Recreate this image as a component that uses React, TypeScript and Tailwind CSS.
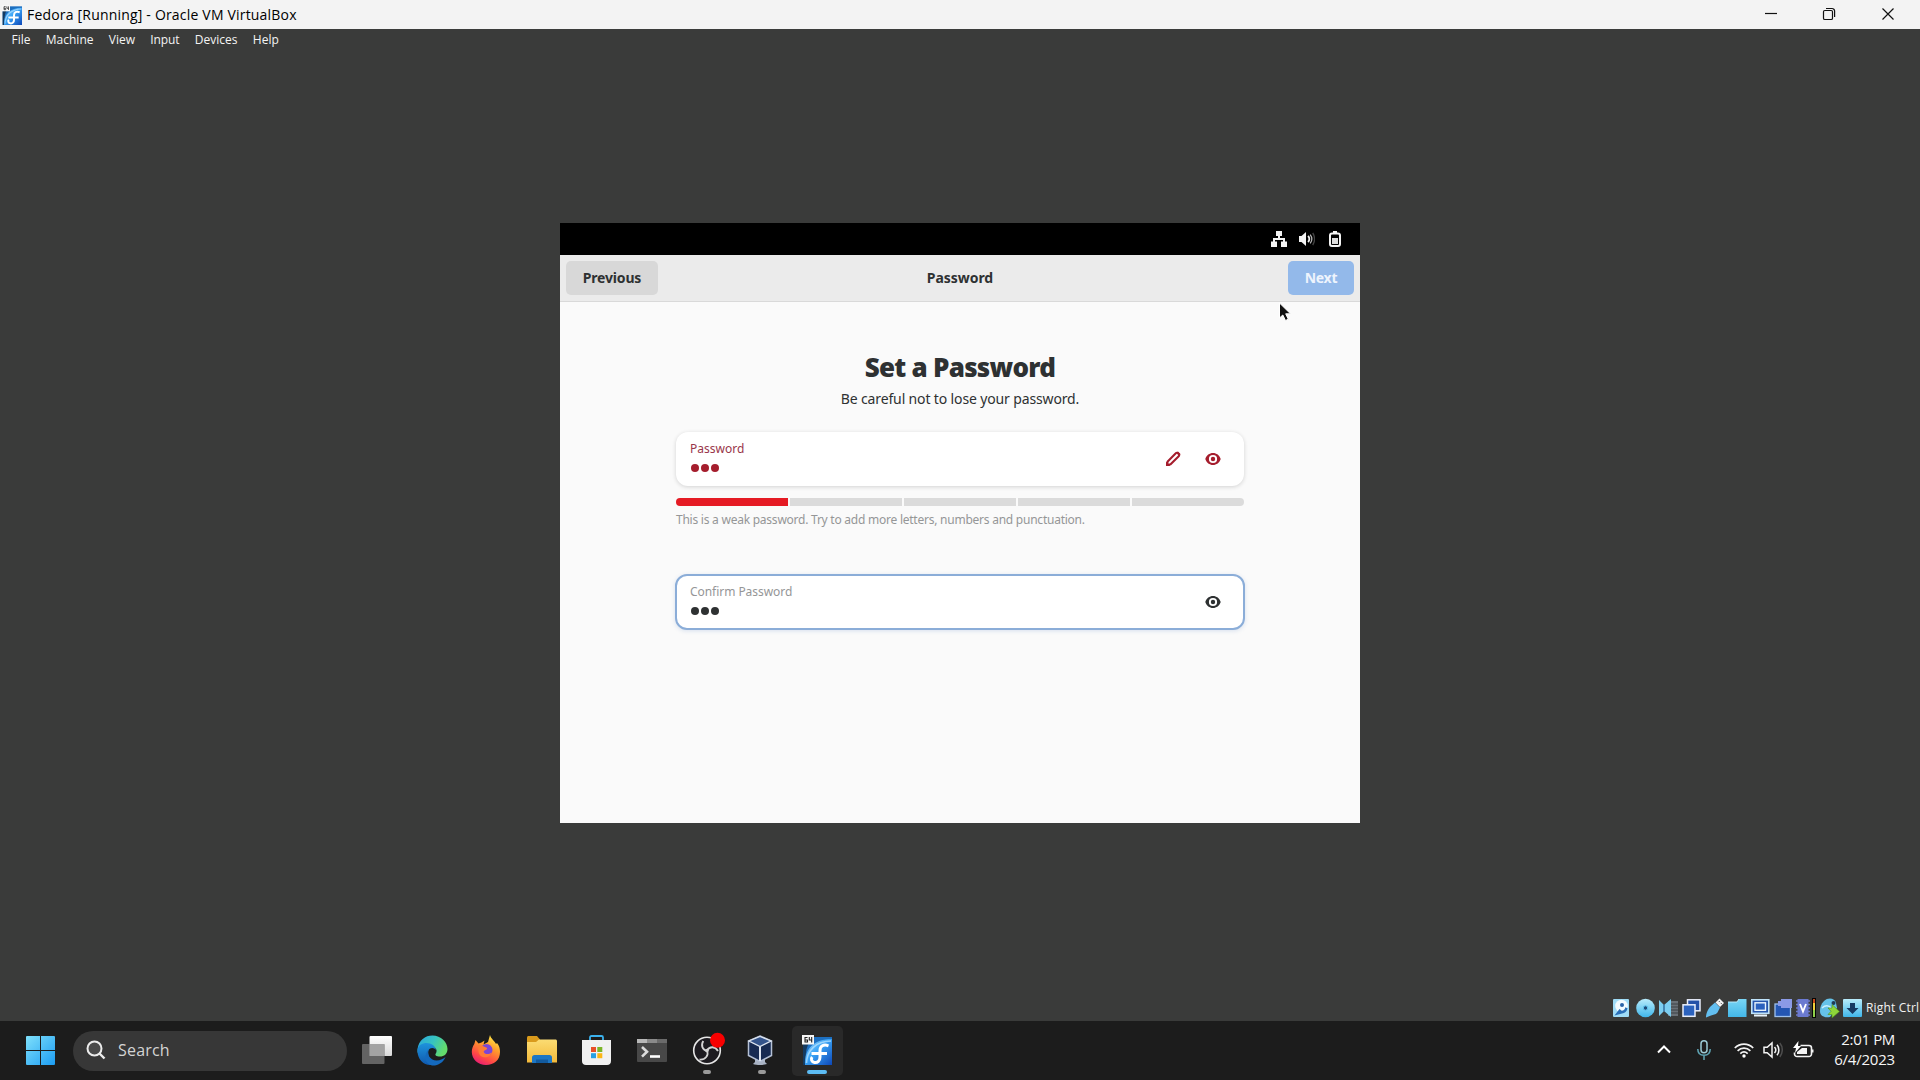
import type { ReactNode } from "react";

const UI = "font-['Open_Sans','Noto_Sans',sans-serif]";
const GUEST = "font-['Noto_Sans','Open_Sans',sans-serif]";

/* ---------- shared artwork ---------- */

function FedoraIcon({ size }: { size: number }) {
  return (
    <svg width={size} height={size} viewBox="0 0 30 30" className="block">
      <defs>
        <linearGradient id="fed" x1="0" y1="0" x2="1" y2="1">
          <stop offset="0" stopColor="#a4dcff" />
          <stop offset=".45" stopColor="#3aa4f6" />
          <stop offset="1" stopColor="#0d47b8" />
        </linearGradient>
      </defs>
      <rect x="1" y="2" width="29" height="28" fill="#1d6fc0" />
      <path d="M1 30V8h6C4 13 3 20 4 30z" fill="#143a60" />
      <path d="M3 30C2 14 12 4 30 4v26z" fill="url(#fed)" />
      <path d="M4.500 28C5 15 14 6.500 29 6" fill="none" stroke="#bfe6ff" strokeWidth="1.600" opacity=".7" />
      <path d="M26.500 10.800c-5-1.800-8.500.2-8.500 4.700v6.500c0 4-2.500 6-5.500 5.500-3-.5-4-3.500-2.300-5.500M9.500 18.600h15.500" fill="none" stroke="#fff" strokeWidth="3" />
      <rect x="0" y="0" width="12" height="9.500" fill="#f7f7f7" />
      <path d="M5.500 2.500H3v4.500h2.500V5H3M7.300 2v3H10M9.700 2V7.500" fill="none" stroke="#222" strokeWidth="1.100" />
    </svg>
  );
}

/* ---------- host window ---------- */

function TitleBar() {
  return (
    <div className="flex h-[29px] shrink-0 items-center bg-[#f3f3f3] pl-[2px] text-black">
      <FedoraIcon size={20} />
      <span className="ml-[5px] whitespace-nowrap text-[14px] leading-[20px] tracking-[0.19px]">Fedora [Running] - Oracle VM VirtualBox</span>
      <div className="ml-auto flex h-full pb-px pr-[2px]">
        <span className="flex w-[58px] items-center justify-center">
          <svg width="14" height="14" viewBox="0 0 14 14"><path d="M1 6.500h12" stroke="#111" strokeWidth="1.200" /></svg>
        </span>
        <span className="flex w-[58px] items-center justify-center">
          <svg width="14" height="14" viewBox="0 0 14 14" fill="none" stroke="#111" strokeWidth="1.200">
            <rect x="1.500" y="3.500" width="9" height="9" rx="1.300" />
            <path d="M4 1.500h6A2.600 2.600 0 0 1 12.600 4.100V10" />
          </svg>
        </span>
        <span className="flex w-[60px] items-center justify-center">
          <svg width="14" height="14" viewBox="0 0 14 14"><path d="M1.500 1.500l11 11M12.500 1.500l-11 11" stroke="#111" strokeWidth="1.200" /></svg>
        </span>
      </div>
    </div>
  );
}

function MenuBar() {
  return (
    <div className="flex h-[22px] shrink-0 items-center gap-[15.300px] pl-[11.500px] text-[12px] leading-[16px] text-[#f4f4f4]">
      <span>File</span>
      <span>Machine</span>
      <span>View</span>
      <span className="tracking-[-0.1px]">Input</span>
      <span>Devices</span>
      <span>Help</span>
    </div>
  );
}

/* ---------- guest desktop ---------- */

function GuestTopBar() {
  return (
    <div className="flex h-8 items-center justify-end bg-black pr-[17px]">
      <svg width="16" height="16" viewBox="0 0 16 16" fill="#f4f4f4">
        <path d="M5 0h6v5H9v2h5v3.500h2V16h-6v-5.500h2V9H4v1.500h2V16H0v-5.500h2V7h5V5H5z" />
      </svg>
      <svg className="ml-[12px]" width="16" height="16" viewBox="0 0 16 16" fill="none">
        <path d="M0 5h2.500L7 1v14l-4.500-4H0z" fill="#f4f4f4" />
        <path d="M9 5c1.800 1.700 1.800 4.300 0 6" stroke="#f4f4f4" strokeWidth="1.800" />
        <path d="M11.200 3.600c2 2.700 2 6.100 0 8.800" stroke="#b5b5b5" strokeWidth="1.300" />
        <path d="M13.700 2c2.500 3.500 2.500 8.500 0 12" stroke="#444" strokeWidth="1.300" />
      </svg>
      <svg className="ml-[12px]" width="16" height="16" viewBox="0 0 16 16">
        <path d="M6 0h4v2H6z" fill="#f4f4f4" />
        <rect x="3" y="2.500" width="10" height="12.500" rx="2" fill="none" stroke="#f4f4f4" strokeWidth="2" />
        <rect x="5" y="7" width="6" height="6" fill="#ddd" />
      </svg>
    </div>
  );
}

function Eye({ color }: { color: string }) {
  return (
    <svg width="16" height="16" viewBox="0 0 16 16">
      <path fillRule="evenodd" fill={color} d="M8 2C4.500 2 1.400 4.300 0.300 8c1.100 3.700 4.200 6 7.700 6s6.600-2.300 7.700-6C14.600 4.300 11.500 2 8 2zm0 1.900a4.100 4.100 0 1 1 0 8.200 4.100 4.100 0 0 1 0-8.200z" />
      <circle cx="8" cy="8" r="2.200" fill={color} />
    </svg>
  );
}

function Pencil() {
  return (
    <svg width="16" height="16" viewBox="0 0 16 16">
      <path d="M2 14l.7-3.600L10.800 2.300a1.600 1.600 0 0 1 2.300 0l.6.6a1.600 1.600 0 0 1 0 2.300L5.600 13.300z" fill="none" stroke="#a51d2d" strokeWidth="2.100" strokeLinejoin="round" />
      <path d="M11 1.500l3.500 3.500 1-2-2.500-2.500zM1 15v-4.500L5.500 15z" fill="#a51d2d" />
    </svg>
  );
}

function Dots({ className }: { className: string }) {
  return (
    <div className="flex gap-[2.400px]">
      {[0, 1, 2].map((i) => (
        <span key={i} className={`h-[8px] w-[7.600px] rounded-full ${className}`} />
      ))}
    </div>
  );
}

function GuestWindow() {
  return (
    <div className={`relative h-[600px] w-[800px] bg-[#fafafa] text-[#2e3132] ${GUEST}`}>
      <GuestTopBar />
      <div className="grid h-[47px] grid-cols-3 items-center border-b border-[#d9d9d9] bg-[#ebebeb] pb-px pl-[6px] pr-[6px] text-[14px] font-bold">
        <div className="flex h-[34px] w-[92px] items-center justify-center rounded-[5px] bg-[#d8d8d8] tracking-[-0.18px]">Previous</div>
        <div className="text-center tracking-[-0.05px]">Password</div>
        <div className="ml-auto flex h-[34px] w-[66px] items-center justify-center rounded-[5px] bg-[#93b9ea] tracking-[-0.25px] text-[#eef4fd]">Next</div>
      </div>

      <div className="mx-auto flex w-[568px] flex-col">
        <h1 className="mt-[49px] text-center text-[26px] font-black leading-[32px] tracking-[-0.75px]">Set a Password</h1>
        <p className="mt-[5px] text-center text-[14px] leading-[22px] tracking-[-0.14px]">Be careful not to lose your password.</p>

        <div className="mt-[22px] flex h-[54px] items-center rounded-[12px] bg-white pl-[14px] pr-[23px] shadow-[0_1px_4px_rgba(0,0,0,0.16)]">
          <div className="flex flex-col pb-[5px]">
            <span className="text-[12px] leading-[16px] text-[#99364a]">Password</span>
            <div className="mt-[7px] pl-px"><Dots className="bg-[#a51d2d]" /></div>
          </div>
          <div className="ml-auto flex gap-[24px]">
            <Pencil />
            <Eye color="#a51d2d" />
          </div>
        </div>

        <div className="mt-[12px] flex h-[8px] gap-[2px] overflow-hidden rounded-[4px]">
          <span className="flex-1 bg-[#e51b24]" />
          <span className="flex-1 bg-[#dbdbdb]" />
          <span className="flex-1 bg-[#dbdbdb]" />
          <span className="flex-1 bg-[#dbdbdb]" />
          <span className="flex-1 bg-[#dbdbdb]" />
        </div>
        <p className="mt-[6px] whitespace-nowrap text-[12px] leading-[16px] tracking-[-0.24px] text-[#959697]">This is a weak password. Try to add more letters, numbers and punctuation.</p>

        <div className="-mx-px mt-[46px] flex h-[56px] items-center rounded-[12px] border-2 border-[#8badd8] bg-white pl-[13px] pr-[22px] shadow-[0_1px_4px_rgba(60,110,190,0.18)]">
          <div className="flex flex-col pb-[5px]">
            <span className="text-[12px] leading-[16px] tracking-[-0.05px] text-[#959697]">Confirm Password</span>
            <div className="mt-[7px] pl-px"><Dots className="bg-[#2e3132]" /></div>
          </div>
          <div className="ml-auto"><Eye color="#2e3132" /></div>
        </div>
      </div>

      <svg className="absolute left-[718px] top-[79px]" width="14" height="20" viewBox="0 0 14 20">
        <path d="M1.500 1v15l3.300-3 2.700 5.500 2.800-1.300-2.600-5.400H12.500z" fill="#111" stroke="#fff" strokeWidth="1" />
      </svg>
    </div>
  );
}

/* ---------- VirtualBox status bar ---------- */

function Defs() {
  return (
    <svg width="0" height="0" className="absolute">
      <defs>
        <linearGradient id="sky" x1="0" y1="0" x2="0" y2="1">
          <stop offset="0" stopColor="#b9ecfb" />
          <stop offset="1" stopColor="#3fb6ea" />
        </linearGradient>
        <linearGradient id="sky2" x1="0" y1="0" x2="0" y2="1">
          <stop offset="0" stopColor="#7ad6f5" />
          <stop offset="1" stopColor="#43b7e8" />
        </linearGradient>
      </defs>
    </svg>
  );
}

function StatusIcon({ w, ml, children }: { w: number; ml: number; children: ReactNode }) {
  return (
    <svg width={w} height="20" viewBox={`0 0 ${w} 20`} className="block shrink-0" style={{ marginLeft: ml }}>
      {children}
    </svg>
  );
}

function StatusBar() {
  return (
    <div className="mt-auto flex h-[26px] shrink-0 items-start pl-[1613px] pt-[3px]">
      <StatusIcon w={16} ml={0}>
        <rect y="1" width="16" height="18" rx="1" fill="#9fdcf7" />
        <circle cx="8.500" cy="8" r="6.300" fill="#f2fbff" />
        <circle cx="9" cy="7" r="2" fill="#2a63a8" />
        <path d="M1.500 17.500l5-6.500 2.200 1.800c2-.2 3.300-1.600 3.600-3.600l2.200 1c-.6 3.200-2.800 5-5.500 5.300z" fill="#2a6fb8" />
      </StatusIcon>
      <StatusIcon w={19} ml={7}>
        <circle cx="9.500" cy="10" r="9.300" fill="url(#sky)" />
        <circle cx="9.500" cy="10" r="2.200" fill="#1e4b78" stroke="#5ec4ef" />
      </StatusIcon>
      <StatusIcon w={19} ml={4}>
        <rect x="9" y="3" width="10" height="15" fill="#6a7076" />
        <path d="M12 6h7M12 9h7M12 12h7M12 15h7" stroke="#3b4044" />
        <path d="M0 2l5 5 7-6v18l-7-6-5 5z" fill="#7ccdf0" />
        <path d="M5 6.500v7" stroke="#255f92" strokeWidth="1.300" />
      </StatusIcon>
      <StatusIcon w={19} ml={4}>
        <rect x="5.500" y="1.800" width="12.500" height="11" fill="#2350a8" stroke="#e9eefb" strokeWidth="1.500" />
        <rect x="1" y="6.800" width="12" height="11.500" fill="#2b62be" stroke="#e9eefb" strokeWidth="1.500" />
      </StatusIcon>
      <StatusIcon w={19} ml={4}>
        <path d="M10.500 4.500L14.500.5 19 5l-4 4z" fill="#f3f3f3" />
        <path d="M14 3.200l.9.900M16 5.200l.9.900" stroke="#333" />
        <path d="M6 8L10 4.500l5 5-2.500 5c-2 2.500-4.500 2-6.500 3L1 19.500c0-3 1.500-8.500 5-11.500z" fill="#63bff0" />
      </StatusIcon>
      <StatusIcon w={19} ml={4}>
        <path d="M0 4h9l2-3h7.500v18H0z" fill="url(#sky2)" />
        <path d="M0 4h9l2-3" fill="none" stroke="#b7e9fb" />
      </StatusIcon>
      <StatusIcon w={19} ml={4}>
        <rect x=".8" y="1.800" width="17" height="13.500" fill="#2656ac" stroke="#bfe3fa" strokeWidth="1.600" />
        <rect x="4" y="4.800" width="10.500" height="7.500" fill="#2b62be" stroke="#e9f4fd" strokeWidth="1.400" />
        <path d="M3 17.500h13" stroke="#e9f4fd" strokeWidth="2" />
      </StatusIcon>
      <StatusIcon w={19} ml={4}>
        <rect x="1" y="6" width="15.500" height="12.500" fill="#2456b3" stroke="#9dc0ee" strokeWidth="1.300" />
        <path d="M4 3h3V1h11v9H7V8H4z" fill="#8b9ae6" />
      </StatusIcon>
      <StatusIcon w={14} ml={3}>
        <path d="M0 3h14M0 6.500h14M0 10h14M0 13.500h14M0 17h14" stroke="#6d7ac8" strokeWidth="1.500" />
        <rect x="1.500" y="1" width="11" height="18" fill="#6b7ad0" />
        <path d="M4 6l3 7.500L10 6" fill="none" stroke="#fff" strokeWidth="1.900" />
      </StatusIcon>
      <StatusIcon w={4} ml={2}>
        <rect width="4" height="20" fill="#050505" />
        <rect x="1" y="1" width="2" height="4" fill="#c84a1a" />
        <rect x="1" y="5" width="2" height="7" fill="#f0cf3a" />
        <rect x="1" y="12" width="2" height="7" fill="#8fce4a" />
      </StatusIcon>
      <StatusIcon w={20} ml={4}>
        <path d="M4 3c4-4 11-3 12 2l1 5-7 9c-6 1-10-1-10-6 0-4 1-7 4-10z" fill="#66c2e9" />
        <path d="M2 10c3-3 7-3 9 0" fill="none" stroke="#c9f0fd" strokeWidth="1.500" />
        <circle cx="13.500" cy="5" r="2" fill="#1d3b57" />
        <path d="M8 10h4V6.500l7.500 7L12 20v-3.500H8l3-3.200z" fill="#8ed63a" stroke="#4c8a1c" strokeWidth=".6" />
      </StatusIcon>
      <StatusIcon w={19} ml={3}>
        <rect y="1" width="19" height="18" rx="1" fill="url(#sky)" />
        <path d="M7 5h5v5h3.500l-6 6-6-6H7z" fill="#173a63" />
      </StatusIcon>
      <span className="ml-[4px] whitespace-nowrap text-[12px] leading-[20px] tracking-[0.17px] text-[#f2f2f2]">Right Ctrl</span>
    </div>
  );
}

/* ---------- Windows taskbar ---------- */

function TaskItem({ children, active, running }: { children: ReactNode; active?: boolean; running?: boolean }) {
  return (
    <div className={`relative flex h-[50px] w-[51px] items-center justify-center rounded-[5px] pb-px ${active ? "bg-[#292929]" : ""}`}>
      {children}
      {running && <span className="absolute bottom-[2px] left-1/2 h-[4px] w-[8px] -translate-x-1/2 rounded-full bg-[#9a9a9a]" />}
      {active && <span className="absolute bottom-[2px] left-1/2 h-[4px] w-[20px] -translate-x-1/2 rounded-full bg-[#5cbcf4]" />}
    </div>
  );
}

function Taskbar() {
  return (
    <div className="flex h-[59px] shrink-0 items-center bg-[#1c1c1c]">
      <svg className="ml-[26px] shrink-0" width="29" height="29" viewBox="0 0 29 29">
        <defs>
          <linearGradient id="win" x1="0" y1="0" x2="1" y2="1">
            <stop offset="0" stopColor="#7fe0fb" />
            <stop offset="1" stopColor="#1c9cf2" />
          </linearGradient>
        </defs>
        <path d="M1 0h13v14H0V1a1 1 0 0 1 1-1zM15 0h13a1 1 0 0 1 1 1v13H15zM0 15h14v14H1a1 1 0 0 1-1-1zM15 15h14v13a1 1 0 0 1-1 1H15z" fill="url(#win)" />
      </svg>

      <div className="ml-[18px] flex h-[40px] w-[274px] shrink-0 items-center rounded-full bg-[#373737] pb-px pl-[13px]">
        <svg width="20" height="20" viewBox="0 0 20 20" fill="none" stroke="#ececec" strokeWidth="2">
          <circle cx="8.500" cy="8.500" r="7" fill="#4a4a4a" />
          <path d="M13.500 13.500l5 5" strokeWidth="2.400" />
        </svg>
        <span className="ml-[12px] text-[16px] leading-[22px] tracking-[0.2px] text-[#d4d4d4]">Search</span>
      </div>

      <div className="ml-[4.500px] flex items-center gap-[4px]">
        <TaskItem>
          <svg width="30" height="28" viewBox="0 0 30 28">
            <defs><linearGradient id="tv" x1="0" y1="0" x2="0" y2="1"><stop offset="0" stopColor="#fff" /><stop offset="1" stopColor="#d9d9d9" /></linearGradient></defs>
            <rect x="7.500" width="22.500" height="20" rx="1" fill="url(#tv)" />
            <rect y="8" width="22.500" height="20" rx="1" fill="#6d6d6d" opacity=".88" />
            <rect x="7.500" y="8" width="15" height="12" fill="#a3a3a3" />
          </svg>
        </TaskItem>
        <TaskItem>
          <svg width="31" height="31" viewBox="0 0 31 31">
            <defs>
              <linearGradient id="e1" x1="0" y1="0" x2="1" y2=".4"><stop offset="0" stopColor="#2aa5df" /><stop offset=".55" stopColor="#37c3c0" /><stop offset="1" stopColor="#63db6c" /></linearGradient>
              <linearGradient id="e2" x1="0" y1="0" x2="0" y2="1"><stop offset="0" stopColor="#1e93dc" /><stop offset="1" stopColor="#0f58ae" /></linearGradient>
            </defs>
            <path d="M.5 14C2 5 8 .5 15.500.5 24 .5 30.500 7 30.500 14c0 5-3.500 7.500-7.500 7.500-4 0-5-1.500-4.500-2.500 3-4-.5-8-5-8C8 11 3 14 .5 18z" fill="url(#e1)" />
            <path d="M.5 16c0-6 5-8 9-8 5 0 9 3 9.500 7-1.500-2.500-6-3-7.500.5-1.500 7 4 12 10 12C11 34 .5 27 .5 16z" fill="url(#e2)" />
            <path d="M11.500 14.500c-2 5 2 11 8 11 4 0 7-2 9-3.500-2.500 6-8 9-13.500 8.500C7 29 7 19 11.500 14.500z" fill="#1469bd" />
          </svg>
        </TaskItem>
        <TaskItem>
          <svg width="30" height="31" viewBox="0 0 30 31" className="-translate-x-px">
            <defs>
              <linearGradient id="ff" x1=".8" y1="0" x2=".3" y2="1"><stop offset="0" stopColor="#fff04a" /><stop offset=".4" stopColor="#ff9a2b" /><stop offset=".75" stopColor="#ff4a45" /><stop offset="1" stopColor="#e81c74" /></linearGradient>
            </defs>
            <path d="M4.500 5l3 3.500 3-1 3-2-1 4L17 7l2-7c1 4 5 6 6 9l1-1c2.500 3 3 6 3 9C29 25 23 30 15 30S.8 24 .8 17c0-3 1-6 2.500-8z" fill="url(#ff)" />
            <circle cx="15.500" cy="15" r="6" fill="#7b45d6" />
            <path d="M7 10c3 0 5 1 7 2 2 .5 3 1 1.500 2.500-2 1-3.500 1.500-2.500 3 1.500 2 5 2 7.500 0-1 6-12 7-13-1z" fill="#ff7b35" />
          </svg>
        </TaskItem>
        <TaskItem>
          <svg width="30" height="28" viewBox="0 0 30 28">
            <defs><linearGradient id="fx" x1="0" y1="0" x2="0" y2="1"><stop offset="0" stopColor="#fbdc73" /><stop offset="1" stopColor="#f3b93a" /></linearGradient></defs>
            <path d="M0 1.500C0 .7.700 0 1.500 0H10l3 3.500V8H0z" fill="#d99a1c" />
            <path d="M0 6h9l3-2.500h16.500c.8 0 1.500.7 1.500 1.500v21.500H0z" fill="url(#fx)" />
            <path d="M5 27v-5.500c0-1.500 1-2.500 2.500-2.500h15c1.500 0 2.500 1 2.500 2.500V27z" fill="#1c76c4" />
            <path d="M9 23.500h12V27H9z" fill="#125a9e" />
          </svg>
        </TaskItem>
        <TaskItem>
          <svg width="29" height="30" viewBox="0 0 29 30" className="-translate-x-px">
            <path d="M8 6V2.500C8 1.500 8.500 1 9.500 1h10c1 0 1.500.5 1.500 1.500V6" fill="none" stroke="#3bb2ee" strokeWidth="1.800" />
            <path d="M0 5h29v21c0 2.500-1.500 4-4 4H4c-2.500 0-4-1.500-4-4z" fill="#f1f1f1" />
            <path d="M9 12h5v5H9z" fill="#e8502a" />
            <path d="M15.300 12h5v5h-5z" fill="#7bb529" />
            <path d="M9 18.200h5v5H9z" fill="#27a0e6" />
            <path d="M15.300 18.200h5v5h-5z" fill="#fbb614" />
          </svg>
        </TaskItem>
        <TaskItem>
          <svg width="30" height="23" viewBox="0 0 30 23">
            <rect width="30" height="23" rx="1" fill="#484848" />
            <path d="M0 0h10v4H0z" fill="#b8b8b8" />
            <path d="M10 0h10v4H10z" fill="#8a8a8a" />
            <path d="M20 0h10v4H20z" fill="#6b6b6b" />
            <path d="M5 8l5 4.800-5 4.800" fill="none" stroke="#dcdcdc" strokeWidth="2.600" />
            <path d="M13 17.500h10" stroke="#fff" strokeWidth="2.600" />
          </svg>
        </TaskItem>
        <TaskItem running>
          <svg width="34" height="34" viewBox="0 0 34 34" className="overflow-visible">
            <circle cx="17" cy="17.500" r="13.300" fill="#1d1b20" stroke="#e6e6e6" strokeWidth="1.600" />
            <g fill="none" stroke="#d4d4d4" strokeWidth="1.800">
              <path d="M17.500 18c-5-1-7-5.500-4.200-10" />
              <path d="M17 17.500c2.500-4.300 8-4.500 11 .5" />
              <path d="M17 17.500c2 4.800-1.500 9.500-7.500 9" />
            </g>
            <circle cx="17" cy="17.500" r="1.800" fill="#d4d4d4" />
            <circle cx="27.500" cy="7.300" r="7.500" fill="#f80000" />
          </svg>
        </TaskItem>
        <TaskItem running>
          <svg width="26" height="30" viewBox="0 0 26 30" className="-translate-x-[2px]">
            <path d="M8 24h10v3l2 2c-4 1.300-10 1.300-14 0l2-2z" fill="#a9b3c4" />
            <path d="M13 1l11.500 5v14.500L13 26.500 1.500 20.500V6z" fill="#172a52" stroke="#b5c1d6" strokeWidth="1.500" />
            <path d="M13 1.500L24 6l-11 5.500L2 6z" fill="#34548c" stroke="#dde4f0" strokeWidth="1.300" />
            <path d="M13 11.500v14.500" stroke="#dde4f0" strokeWidth="2" />
          </svg>
        </TaskItem>
        <TaskItem active>
          <FedoraIcon size={30} />
        </TaskItem>
      </div>

      <div className="ml-auto flex items-center pb-[2px] pr-[25px]">
        <svg width="14" height="9" viewBox="0 0 14 9"><path d="M1 7.500l6-6 6 6" fill="none" stroke="#fff" strokeWidth="2" /></svg>
        <svg className="ml-[26px]" width="14" height="20" viewBox="0 0 14 20" fill="none" strokeWidth="1.500">
          <rect x="4" y=".8" width="6" height="12" rx="3" stroke="#9ccbd6" />
          <path d="M.8 9c0 4 2.500 6.300 6.200 6.300s6.200-2.300 6.200-6.300M7 15.300V20" stroke="#5fa5b5" />
        </svg>
        <svg className="ml-[23px]" width="20" height="16" viewBox="0 0 20 16" fill="none" stroke="#f4f4f4" strokeWidth="1.700">
          <path d="M.8 6c5.200-5.200 13.200-5.200 18.400 0" />
          <path d="M3.600 8.900c3.700-3.600 9.100-3.600 12.800 0" />
          <path d="M6.300 11.600c2.200-2 5.200-2 7.400 0" />
          <circle cx="10" cy="14" r="1.700" fill="#fff" stroke="none" />
        </svg>
        <svg className="ml-[9px]" width="20" height="18" viewBox="0 0 20 18" fill="none" stroke="#f4f4f4" strokeWidth="1.500">
          <path d="M1 6.300h3.200L9 2v14l-4.800-4.300H1z" />
          <path d="M11.500 6c1.500 1.700 1.500 4.300 0 6M14 3.800c2.500 3 2.500 7.400 0 10.400" />
          <path d="M16.800 2c3.300 4 3.300 10 0 14" stroke="#4d4d4d" />
        </svg>
        <svg className="ml-[10px]" width="21" height="18" viewBox="0 0 21 18">
          <path d="M7.500 4.500H16a2.500 2.500 0 0 1 2.500 2.500v6a2.500 2.500 0 0 1-2.500 2.500H4A2.500 2.500 0 0 1 1.500 13v-1.500" fill="none" stroke="#f4f4f4" strokeWidth="1.600" />
          <path d="M9 7h5v6H4v-2z" fill="#f4f4f4" />
          <path d="M19 8.500h1.500v3H19z" fill="#f4f4f4" />
          <path d="M5.500 0L0 7h3l-1 5 6-7H5z" fill="#fff" />
        </svg>
        <div className="ml-[20px] flex w-[61px] flex-col items-end whitespace-nowrap pb-[2px] text-[15px] leading-[20px] text-[#f6f6f6]">
          <span className="tracking-[-0.35px]">2:01 PM</span>
          <span className="tracking-[-0.2px]">6/4/2023</span>
        </div>
      </div>
    </div>
  );
}

export default function App() {
  return (
    <div className={`flex h-[1080px] w-[1920px] flex-col overflow-hidden bg-[#3a3b3a] ${UI}`}>
      <Defs />
      <TitleBar />
      <MenuBar />
      <div className="mt-[172px] flex justify-center">
        <GuestWindow />
      </div>
      <StatusBar />
      <Taskbar />
    </div>
  );
}
